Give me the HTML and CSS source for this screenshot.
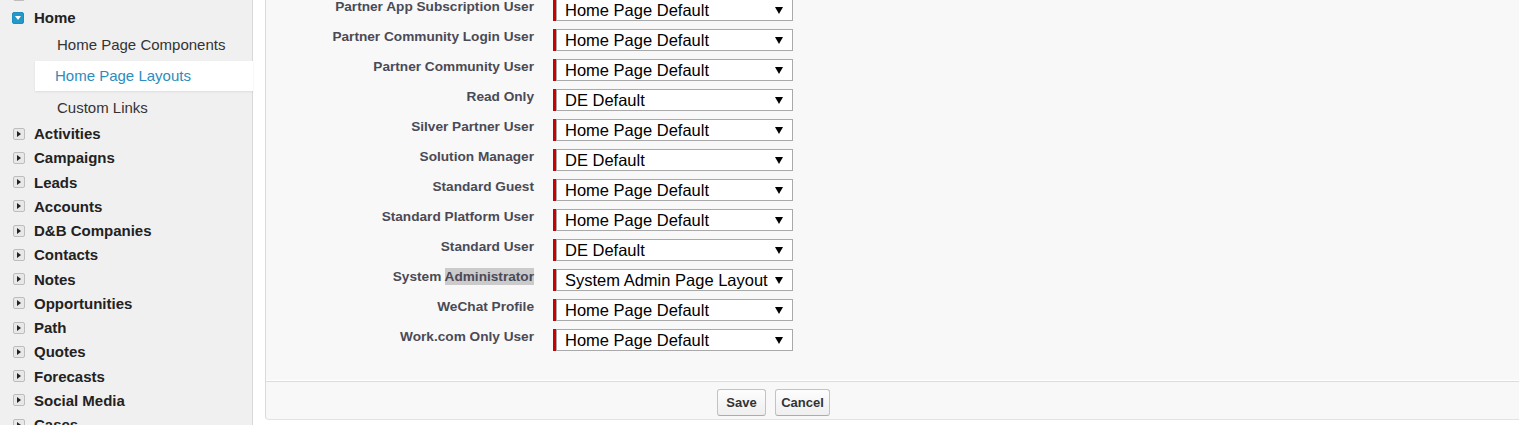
FILE: index.html
```html
<!DOCTYPE html>
<html>
<head>
<meta charset="utf-8">
<title>Home Page Layout Assignment</title>
<link rel="stylesheet" href="styles.css">
</head>
<body>
<div class="page">
	<div class="sidebar">
		<ul class="tree">
			<li class="node node-peek"><div class="node-head"><span class="twisty"></span></div></li>
			<li class="node node-open">
				<div class="node-head node-home"><span class="twisty twisty-open"></span>Home</div>
				<ul class="children">
					<li>Home Page Components</li>
					<li class="current">Home Page Layouts</li>
					<li>Custom Links</li>
				</ul>
			</li>
			<li class="node"><div class="node-head"><span class="twisty"></span>Activities</div></li>
			<li class="node"><div class="node-head"><span class="twisty"></span>Campaigns</div></li>
			<li class="node"><div class="node-head"><span class="twisty"></span>Leads</div></li>
			<li class="node"><div class="node-head"><span class="twisty"></span>Accounts</div></li>
			<li class="node"><div class="node-head"><span class="twisty"></span>D&amp;B Companies</div></li>
			<li class="node"><div class="node-head"><span class="twisty"></span>Contacts</div></li>
			<li class="node"><div class="node-head"><span class="twisty"></span>Notes</div></li>
			<li class="node"><div class="node-head"><span class="twisty"></span>Opportunities</div></li>
			<li class="node"><div class="node-head"><span class="twisty"></span>Path</div></li>
			<li class="node"><div class="node-head"><span class="twisty"></span>Quotes</div></li>
			<li class="node"><div class="node-head"><span class="twisty"></span>Forecasts</div></li>
			<li class="node"><div class="node-head"><span class="twisty"></span>Social Media</div></li>
			<li class="node"><div class="node-head"><span class="twisty"></span>Cases</div></li>
		</ul>
	</div>
	<div class="main">
		<div class="panel">
			<div class="form">
				<div class="row"><div class="row-label">Partner App Subscription User</div><div class="row-field"><span class="required"></span><div class="select"><span>Home Page Default</span><i class="arrow"></i></div></div></div>
				<div class="row"><div class="row-label">Partner Community Login User</div><div class="row-field"><span class="required"></span><div class="select"><span>Home Page Default</span><i class="arrow"></i></div></div></div>
				<div class="row"><div class="row-label">Partner Community User</div><div class="row-field"><span class="required"></span><div class="select"><span>Home Page Default</span><i class="arrow"></i></div></div></div>
				<div class="row"><div class="row-label">Read Only</div><div class="row-field"><span class="required"></span><div class="select"><span>DE Default</span><i class="arrow"></i></div></div></div>
				<div class="row"><div class="row-label">Silver Partner User</div><div class="row-field"><span class="required"></span><div class="select"><span>Home Page Default</span><i class="arrow"></i></div></div></div>
				<div class="row"><div class="row-label">Solution Manager</div><div class="row-field"><span class="required"></span><div class="select"><span>DE Default</span><i class="arrow"></i></div></div></div>
				<div class="row"><div class="row-label">Standard Guest</div><div class="row-field"><span class="required"></span><div class="select"><span>Home Page Default</span><i class="arrow"></i></div></div></div>
				<div class="row"><div class="row-label">Standard Platform User</div><div class="row-field"><span class="required"></span><div class="select"><span>Home Page Default</span><i class="arrow"></i></div></div></div>
				<div class="row"><div class="row-label">Standard User</div><div class="row-field"><span class="required"></span><div class="select"><span>DE Default</span><i class="arrow"></i></div></div></div>
				<div class="row"><div class="row-label">System <span class="hit">Administrator</span></div><div class="row-field"><span class="required"></span><div class="select"><span>System Admin Page Layout</span><i class="arrow"></i></div></div></div>
				<div class="row"><div class="row-label">WeChat Profile</div><div class="row-field"><span class="required"></span><div class="select"><span>Home Page Default</span><i class="arrow"></i></div></div></div>
				<div class="row"><div class="row-label">Work.com Only User</div><div class="row-field"><span class="required"></span><div class="select"><span>Home Page Default</span><i class="arrow"></i></div></div></div>
			</div>
			<div class="actions">
				<button class="btn btn-save" type="button">Save</button>
				<button class="btn btn-cancel" type="button">Cancel</button>
			</div>
		</div>
	</div>
</div>
</body>
</html>
```

FILE: styles.css
```css
*{margin:0;padding:0;box-sizing:border-box;}
html,body{height:100%;overflow:hidden;}
body{font-family:"Liberation Sans",Arial,sans-serif;background:#fff;}
.page{display:flex;height:425px;}

/* left tree */
.sidebar{width:253px;flex:none;background:#f0f0f0;border-right:1px solid #d9d9d9;}
.tree,.tree ul{list-style:none;}
.tree{margin-top:-17px;}
.node-head{display:flex;align-items:center;height:24.25px;font-size:15px;font-weight:bold;color:#222;white-space:nowrap;}
.node-home{height:21.25px;}
.twisty{position:relative;flex:none;width:12px;height:12px;margin:0 9px 0 13px;border:1px solid #bdbdbd;border-radius:2px;background:#e8e8e8;}
.twisty:after{content:"";position:absolute;left:3px;top:2px;border-left:4px solid #222;border-top:3px solid transparent;border-bottom:3px solid transparent;}
.twisty-open{margin:0 10px 0 12px;border-color:#1c8fbf;background:#2499c9;}
.twisty-open:after{left:2px;top:3px;border-top:4px solid #fff;border-left:3px solid transparent;border-right:3px solid transparent;border-bottom:0;}
.children{margin:0 0 -1.5px 35px;}
.children li{height:31.5px;line-height:31.5px;padding-left:22px;font-size:15px;color:#333;white-space:nowrap;}
.children li.current{height:29.5px;line-height:29.5px;margin:1px -1px 1px 0;padding-left:20px;background:#fff;color:#2a8dbd;box-shadow:0 1px 2px rgba(0,0,0,.08);}

/* content */
.main{flex:1;padding-left:12px;}
.panel{height:421px;background:#f8f8f8;border-left:1px solid #dadada;border-bottom:1px solid #e3e3e3;border-bottom-left-radius:4px;}
.form{margin-top:-1px;padding-bottom:22px;}
.row{display:flex;height:30px;}
.row-label{width:268px;flex:none;text-align:right;font-size:13.65px;line-height:16px;font-weight:bold;color:#4a4a56;white-space:nowrap;}
.hit{background:#cbcbcb;padding:1px 0;}
.row-field{display:flex;height:22px;margin-left:19px;}
.required{width:3px;background:#c00;}
.select{display:flex;align-items:center;justify-content:space-between;width:237px;height:22px;padding:0 9px 0 8px;border:1px solid #a9a9a9;background:#fff;font-size:16.5px;line-height:20px;color:#000;white-space:nowrap;}
.arrow{flex:none;margin-left:4px;border-top:7px solid #000;border-left:4px solid transparent;border-right:4px solid transparent;}

.actions{display:flex;padding:7px 0 4px 451px;border-top:1px solid #dcdcdc;box-shadow:0 -1px 0 #fff;}
.btn{height:27px;border:1px solid #c3c3c3;border-bottom-color:#acacac;border-radius:3px;background:linear-gradient(#fdfdfd,#efefef);font:bold 13px "Liberation Sans",Arial,sans-serif;color:#333;cursor:pointer;}
.btn-save{width:49px;}
.btn-cancel{width:55px;margin-left:9px;}
```
